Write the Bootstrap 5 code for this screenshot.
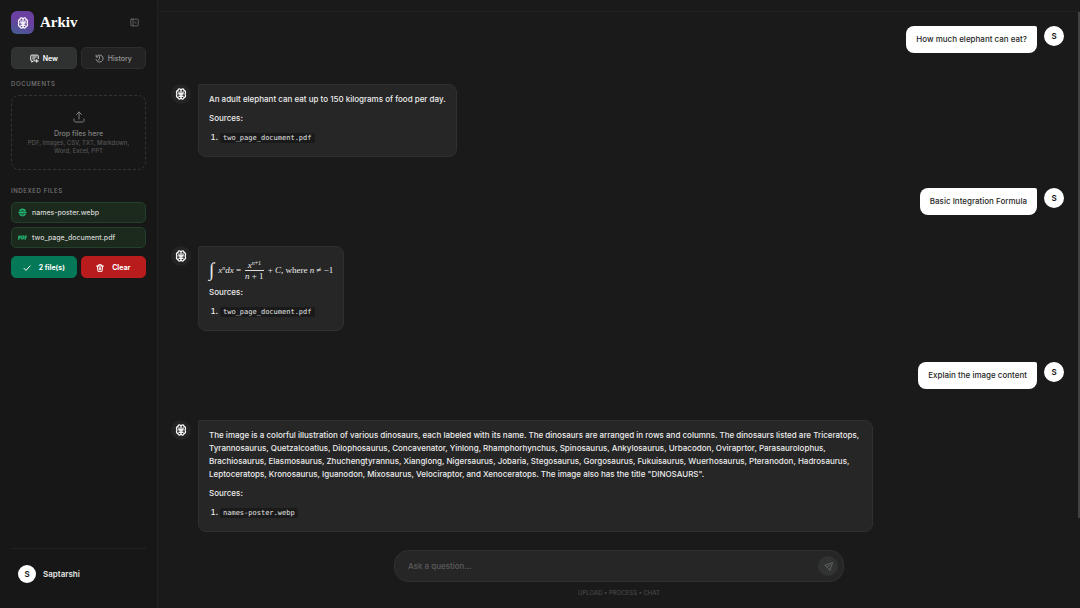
<!DOCTYPE html>
<html lang="en">
<head>
<meta charset="utf-8">
<meta name="viewport" content="width=device-width, initial-scale=1">
<title>Arkiv</title>
<link href="https://cdn.jsdelivr.net/npm/bootstrap@5.3.0/dist/css/bootstrap.min.css" rel="stylesheet">
<style>
  body { background: #1a1a1a; color: #ececec; font-family: Inter, "Open Sans", sans-serif; font-size: 8px; font-weight: 500; line-height: 13px; }
  button, input { font-family: inherit; font-weight: inherit; }
  svg { display: block; fill: none; stroke: currentColor; stroke-width: 2; stroke-linecap: round; stroke-linejoin: round; flex: none; }
  .side-pane { width: 158px; padding: 11px; background: #171717; border-right: 1px solid #222; }
  .brand-tile { width: 23px; height: 23px; border-radius: 6px; background: linear-gradient(200deg, #6a41a0 45%, #4b5596 85%, #3d6a90); color: #fff; }
  .brand-row { gap: 6px; padding-right: 7px; margin-bottom: 13px; }
  .brand-name { font: bold 15px/23px "Liberation Serif", serif; color: #fff; }
  .bare { background: none; border: 0; padding: 0; color: #777; }
  .act { height: 22px; border: 1px solid #2e2e2e; border-radius: 5px; font-size: 7px; line-height: 10px; padding: 1px 0 0; color: #999; background: #232323; flex: 1 1 0; }
  .act.is-on { background: #303232; border-color: #343636; color: #fff; font-weight: 600; }
  .act.ok { background: #047857; border-color: #047857; color: #fff; font-weight: 700; }
  .act.danger { background: #b91c1c; border-color: #b91c1c; color: #fff; font-weight: 700; }
  .side-label { font-size: 6px; line-height: 10px; font-weight: 500; letter-spacing: 0.1em; color: #777; margin: 10px 0 6px; }
  .drop { height: 75px; border: 1px dashed #333; border-radius: 8px; background: none; color: #808080; line-height: 10px; font-size: 7px; padding: 0 8px; margin-bottom: 6px; gap: 6px; }
  .drop-types { font-size: 6px; line-height: 8px; color: #555; }
  .file-row { height: 21px; border: 1px solid #24402a; border-radius: 5px; background: #1b2a1d; color: #d4d4d4; font-size: 7px; padding: 0 6px; gap: 5px; }
  .file-row svg { color: #22b573; stroke-width: 3; }
  .account { border-top: 1px solid #222; padding: 16px 7px 14px; gap: 7px; font-weight: 600; color: #e5e5e5; }
  .face { width: 20px; height: 20px; border-radius: 50%; background: #fff; color: #171717; font-size: 8px; font-weight: 600; flex: none; }
  .face.dim { background: #242424; color: #fff; }
  .face.sm { width: 18px; height: 18px; }
  .top-strip { height: 12px; border-bottom: 1px solid #212121; }
  .talk { padding: 14px 16px 0 13px; gap: 31px; min-height: 0; }
  .turn { gap: 7px; }
  .talk-thumb { top: 0; right: 0; width: 2px; height: 94%; background: #424242; }
  .ask-bubble { background: #fff; color: #1f1f1f; border-radius: 8px 2px 8px 8px; padding: 7px 10px; }
  .reply { background: #262626; border: 1px solid #303030; border-radius: 2px 8px 8px 8px; padding: 8px 10px 12px; white-space: nowrap; }
  .reply.full { padding-right: 13px; }
  .reply p { margin: 0 0 6px; }
  .reply ol { margin: 6px 0 0; padding-left: 11px; }
  .reply code { font: 7px/10px "DejaVu Sans Mono", monospace; color: #e4e4e4; background: #1a1a1a; border-radius: 2px; padding: 1px 3px; }
  .formula { height: 26px; padding-top: 4px; font: 9px/12px "Liberation Serif", serif; gap: 4px; margin-bottom: 5px; }
  .formula .integral { font: italic 19px/22px "Liberation Serif", serif; }
  .formula sup { font-size: 6px; line-height: 0; }
  .frac-top { border-bottom: 1px solid #ddd; padding: 0 2px; line-height: 10px; text-align: center; }
  .frac-low { line-height: 10px; text-align: center; }
  .compose { width: 450px; max-width: 90%; height: 32px; border: 1px solid #303030; border-radius: 14px; background: #262626; padding: 0 5px 0 13px; }
  .compose input { background: none; border: 0; outline: 0; color: #ececec; font-size: 8px; padding: 0; min-width: 0; }
  .compose input::placeholder { color: #5c5c5c; opacity: 1; }
  .send { width: 20px; height: 20px; border-radius: 50%; background: #303332; color: #707070; }
  .tagline { font-size: 6px; line-height: 10px; color: #484848; margin: 6px 0 10px; }
</style>
</head>
<body>
<svg class="d-none" aria-hidden="true">
  <symbol id="brain" viewBox="0 0 24 24">
    <path stroke-width="2.6" d="M12 4.500C11 1 6 1 6 5 3 5 2 9 4 12 2 15 3 19 6 19c0 4 5 4 6 .5M12 4.500C13 1 18 1 18 5c3 0 4 4 2 7 2 3 1 7-2 7 0 4-5 4-6 .5M12 4v16M8 8v4h8V8M8 16.500h8"/>
  </symbol>
</svg>
<div class="d-flex vh-100 overflow-hidden">
  <aside class="side-pane d-flex flex-column flex-shrink-0">
    <div class="brand-row d-flex align-items-center">
      <span class="brand-tile d-flex align-items-center justify-content-center"><svg width="12" height="12"><use href="#brain"/></svg></span>
      <span class="brand-name">Arkiv</span>
      <button class="bare ms-auto" type="button" aria-label="Collapse sidebar"><svg width="9" height="9" viewBox="0 0 24 24"><rect x="2" y="3" width="20" height="18" rx="2"/><path d="M8 3v18M16 9l-3 3 3 3"/></svg></button>
    </div>
    <div class="d-flex gap-1">
      <button class="act is-on d-flex align-items-center justify-content-center gap-1" type="button"><svg width="9" height="9" viewBox="0 0 24 24"><path stroke-width="2.6" d="M12 18H9l-4 4v-4H4a2 2 0 0 1-2-2V5a2 2 0 0 1 2-2h16a2 2 0 0 1 2 2v7M7 8h10M7 13h6M18 15v7M14 18.500h8"/></svg>New</button>
      <button class="act d-flex align-items-center justify-content-center gap-1" type="button"><svg width="9" height="9" viewBox="0 0 24 24"><path stroke-width="2.6" d="M3 15a9.500 9.500 0 1 0 1-8M3 3v5h5M12 7v5l-3 4"/></svg>History</button>
    </div>
    <h2 class="side-label">DOCUMENTS</h2>
    <button class="drop d-flex flex-column align-items-center justify-content-center" type="button">
      <svg width="12" height="12" viewBox="0 0 24 24"><path d="M12 16V2M7 7l5-5 5 5M2 16v3a3 3 0 0 0 3 3h14a3 3 0 0 0 3-3v-3"/></svg>
      <span><span class="d-block">Drop files here</span>
      <span class="drop-types d-block">PDF, Images, CSV, TXT, Markdown,<br>Word, Excel, PPT</span></span>
    </button>
    <h2 class="side-label">INDEXED FILES</h2>
    <div class="file-row d-flex align-items-center mb-1"><svg width="9" height="9" viewBox="0 0 24 24"><path d="M4 8a9 9 0 0 1 16 0zM4 16a9 9 0 0 0 16 0zM2 12h20"/></svg><span>names-poster.webp</span></div>
    <div class="file-row d-flex align-items-center mb-2"><svg width="9" height="9" viewBox="0 0 24 24"><path d="M2 17V8h4v5H2M10 8v8h2l3-2V8zM19 17V8h4M19 12h3"/></svg><span>two_page_document.pdf</span></div>
    <div class="d-flex gap-1">
      <button class="act ok d-flex align-items-center justify-content-center gap-2" type="button"><svg width="8" height="8" viewBox="0 0 24 24"><path stroke-width="3" d="M3 13l6 6L21 6"/></svg>2 file(s)</button>
      <button class="act danger d-flex align-items-center justify-content-center gap-2" type="button"><svg width="8" height="8" viewBox="0 0 24 24"><path stroke-width="3" d="M2 6h20M8 6V2h8v4M4 6l2 16h12l2-16M10 11v6M14 11v6"/></svg>Clear</button>
    </div>
    <div class="account d-flex align-items-center mt-auto"><span class="face sm d-flex align-items-center justify-content-center">S</span><span>Saptarshi</span></div>
  </aside>
  <main class="d-flex flex-column flex-grow-1 overflow-hidden">
    <div class="top-strip flex-shrink-0"></div>
    <section class="talk d-flex flex-column flex-grow-1 position-relative overflow-hidden">
      <div class="turn d-flex justify-content-end align-items-start"><div class="ask-bubble">How much elephant can eat?</div><span class="face d-flex align-items-center justify-content-center">S</span></div>
      <div class="turn d-flex align-items-start">
        <span class="face dim d-flex align-items-center justify-content-center"><svg width="12" height="12"><use href="#brain"/></svg></span>
        <div class="reply"><p>An adult elephant can eat up to 150 kilograms of food per day.</p><div>Sources:</div><ol><li><code>two_page_document.pdf</code></li></ol></div>
      </div>
      <div class="turn d-flex justify-content-end align-items-start"><div class="ask-bubble">Basic Integration Formula</div><span class="face d-flex align-items-center justify-content-center">S</span></div>
      <div class="turn d-flex align-items-start">
        <span class="face dim d-flex align-items-center justify-content-center"><svg width="12" height="12"><use href="#brain"/></svg></span>
        <div class="reply">
          <div class="formula d-flex align-items-center"><span class="integral">∫</span><span><i>x</i><sup><i>n</i></sup><i>dx</i> =</span><span><span class="frac-top d-block"><i>x</i><sup><i>n</i>+1</sup></span><span class="frac-low d-block"><i>n</i> + 1</span></span><span>+ <i>C</i>, where <i>n</i> ≠ −1</span></div>
          <div>Sources:</div><ol><li><code>two_page_document.pdf</code></li></ol>
        </div>
      </div>
      <div class="turn d-flex justify-content-end align-items-start"><div class="ask-bubble">Explain the image content</div><span class="face d-flex align-items-center justify-content-center">S</span></div>
      <div class="turn d-flex align-items-start">
        <span class="face dim d-flex align-items-center justify-content-center"><svg width="12" height="12"><use href="#brain"/></svg></span>
        <div class="reply full"><p>The image is a colorful illustration of various dinosaurs, each labeled with its name. The dinosaurs are arranged in rows and columns. The dinosaurs listed are Triceratops,<br>Tyrannosaurus, Quetzalcoatlus, Dilophosaurus, Concavenator, Yinlong, Rhamphorhynchus, Spinosaurus, Ankylosaurus, Urbacodon, Oviraprtor, Parasaurolophus,<br>Brachiosaurus, Elasmosaurus, Zhuchengtyrannus, Xianglong, Nigersaurus, Jobaria, Stegosaurus, Gorgosaurus, Fukuisaurus, Wuerhosaurus, Pteranodon, Hadrosaurus,<br>Leptoceratops, Kronosaurus, Iguanodon, Mixosaurus, Velociraptor, and Xenoceratops. The image also has the title "DINOSAURS".</p><div>Sources:</div><ol><li><code>names-poster.webp</code></li></ol></div>
      </div>
      <div class="talk-thumb position-absolute"></div>
    </section>
    <footer class="d-flex flex-column align-items-center flex-shrink-0">
      <form class="compose d-flex align-items-center">
        <input class="flex-grow-1" type="text" placeholder="Ask a question..." aria-label="Ask a question">
        <button class="bare send d-flex align-items-center justify-content-center" type="button" aria-label="Send"><svg width="9" height="9" viewBox="0 0 24 24"><path d="M22 2L2 9l7 5 6 8zM9 14l7-6"/></svg></button>
      </form>
      <p class="tagline">UPLOAD • PROCESS • CHAT</p>
    </footer>
  </main>
</div>
<script src="https://cdn.jsdelivr.net/npm/bootstrap@5.3.0/dist/js/bootstrap.bundle.min.js"></script>
</body>
</html>
